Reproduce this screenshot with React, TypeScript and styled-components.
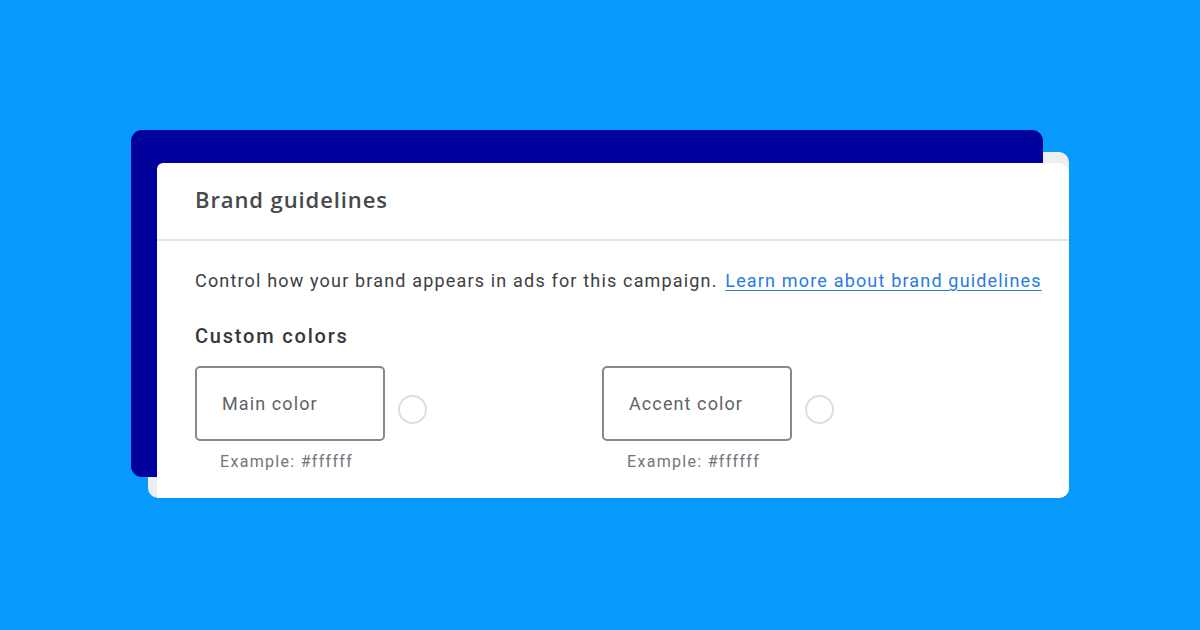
import * as React from "react";
import styled, { createGlobalStyle } from "styled-components";

const GlobalStyle = createGlobalStyle`
  html, body {
    margin: 0;
    padding: 0;
    background: #0899fd;
  }
  body {
    font-family: Roboto, "Liberation Sans", Arial, sans-serif;
  }
`;

const Page = styled.div`
  width: 1200px;
  height: 630px;
  box-sizing: border-box;
  padding: 152px 0 0 148px;
  background: #0899fd;
  overflow: hidden;
`;

const Card = styled.div`
  position: relative;
  width: 921px;
  height: 346px;
  box-sizing: border-box;
  padding: 11px 0 0 9px;
  background: #eceef2;
  border-radius: 10px;
  display: flex;
`;

// the dark panel peeking out behind the card
const BackPanel = styled.div`
  position: absolute;
  left: -17px;
  top: -22px;
  width: 912px;
  height: 347px;
  background: #00009c;
  border-radius: 11px;
  z-index: 0;
`;

const Panel = styled.div`
  position: relative;
  z-index: 1;
  flex: 1;
  background: #ffffff;
  border-top-left-radius: 6px;
  border-top-right-radius: 10px;
  border-bottom-right-radius: 10px;
  display: flex;
  flex-direction: column;
`;

const Header = styled.div`
  height: 78px;
  box-sizing: border-box;
  padding: 0 0 4px 38px;
  display: flex;
  align-items: center;
  border-bottom: 2px solid #e3e4e7;
`;

const Title = styled.h2`
  margin: 0;
  font-family: "Open Sans", Roboto, sans-serif;
  font-size: 22px;
  font-weight: 600;
  color: #46494c;
  letter-spacing: 0.9px;
`;

const Body = styled.div`
  padding: 28px 0 0 38px;
  display: flex;
  flex-direction: column;
`;

const Intro = styled.p`
  margin: 0;
  font-size: 18px;
  letter-spacing: 1.17px;
  color: #3c4043;
  line-height: 24px;
`;

const Link = styled.a`
  color: #2a7ae4;
  text-decoration: underline;
  text-underline-offset: 3px;
  margin-left: 2px;
  cursor: pointer;
`;

const SectionTitle = styled.h3`
  margin: 31px 0 0;
  font-size: 20px;
  font-weight: 500;
  letter-spacing: 1.8px;
  color: #36393c;
  line-height: 24px;
`;

const Fields = styled.div`
  margin-top: 18px;
  display: flex;
`;

const FieldGroup = styled.div`
  width: 407px;
  display: flex;
  flex-direction: column;
`;

const FieldRow = styled.div`
  display: flex;
  align-items: center;
  gap: 13px;
`;

const InputBox = styled.div`
  width: 190px;
  height: 75px;
  box-sizing: border-box;
  border: 2px solid #85888c;
  border-radius: 5px;
  display: flex;
  align-items: center;
  padding-left: 25px;
  font-size: 18px;
  letter-spacing: 1.1px;
  color: #606367;
`;

const Swatch = styled.div`
  width: 29px;
  height: 29px;
  box-sizing: border-box;
  border: 2px solid #dcdee1;
  border-radius: 50%;
  margin-top: 12px;
`;

const Helper = styled.div`
  margin: 11px 0 0 25px;
  font-size: 16px;
  letter-spacing: 1.3px;
  color: #72767a;
`;

const fields = [
  { label: "Main color", hint: "Example: #ffffff" },
  { label: "Accent color", hint: "Example: #ffffff" },
];

export default function App() {
  return (
    <>
      <GlobalStyle />
      <Page>
        <Card>
          <BackPanel />
          <Panel>
            <Header>
              <Title>Brand guidelines</Title>
            </Header>
            <Body>
              <Intro>
                Control how your brand appears in ads for this campaign.{" "}
                <Link>Learn more about brand guidelines</Link>
              </Intro>
              <SectionTitle>Custom colors</SectionTitle>
              <Fields>
                {fields.map((f) => (
                  <FieldGroup key={f.label}>
                    <FieldRow>
                      <InputBox>{f.label}</InputBox>
                      <Swatch />
                    </FieldRow>
                    <Helper>{f.hint}</Helper>
                  </FieldGroup>
                ))}
              </Fields>
            </Body>
          </Panel>
        </Card>
      </Page>
    </>
  );
}
